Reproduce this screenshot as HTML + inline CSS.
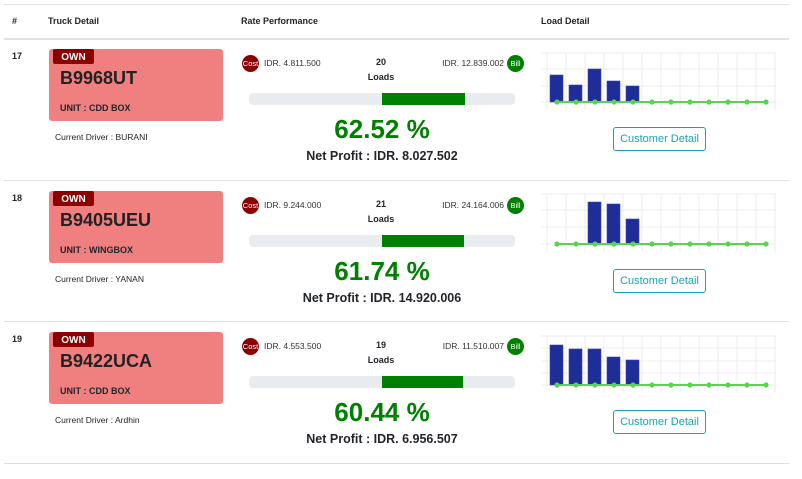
<!DOCTYPE html>
<html><head><meta charset="utf-8"><style>
*{margin:0;padding:0;box-sizing:border-box}
body{width:802px;height:479px;background:#fff;font-family:"Liberation Sans",sans-serif;color:#212529;position:relative;overflow:hidden}
.a{position:absolute;white-space:nowrap}
.line{position:absolute;left:4px;width:785px;background:#dee2e6}
.h{font-size:9px;font-weight:bold;top:16px}
.card{position:absolute;left:49px;width:174px;height:72px;background:#f08080;border-radius:3px}
.own{position:absolute;left:53px;width:41px;height:15px;background:#8b0000;color:#fff;font-size:10px;font-weight:bold;display:flex;align-items:center;justify-content:center;border-radius:2px;padding-top:1px}
.plate{font-size:18px;font-weight:bold;left:60px;color:#222}
.unit{font-size:9px;font-weight:bold;left:60px}
.drv{font-size:8.5px;left:55px}
.circ{position:absolute;width:17px;height:17px;border-radius:50%;color:#fff;font-size:7.5px;display:flex;align-items:center;justify-content:center}
.sm{font-size:8.5px;color:#333}
.loads{font-size:9px;font-weight:bold;text-align:center;width:40px;left:361px;line-height:15px}
.bar{position:absolute;left:249px;width:266px;height:12px;background:#e9ecef;border-radius:4px}
.fill{position:absolute;left:382px;height:12px;background:#008000}
.pct{font-size:26px;font-weight:bold;color:#008000;width:300px;left:232px;text-align:center}
.np{font-size:12.5px;font-weight:bold;width:300px;left:232px;text-align:center}
.btn{position:absolute;left:613px;width:93px;height:24px;border:1px solid #17a2b8;border-radius:3px;color:#17a2b8;font-size:11px;text-align:center;line-height:22px}
.num{font-size:9px;font-weight:bold;left:12px}
</style></head><body>
<div class="line" style="top:4px;height:1px"></div>
<div class="a h" style="left:12px">#</div>
<div class="a h" style="left:48px">Truck Detail</div>
<div class="a h" style="left:241px">Rate Performance</div>
<div class="a h" style="left:541px">Load Detail</div>
<div class="line" style="top:38px;height:2px"></div>

<!-- row 1 -->
<div class="a num" style="top:51px">17</div>
<div class="card" style="top:49px"></div><div class="own" style="top:49px">OWN</div>
<div class="a plate" style="top:68px">B9968UT</div>
<div class="a unit" style="top:103px">UNIT : CDD BOX</div>
<div class="a drv" style="top:132px">Current Driver : BURANI</div>
<div class="circ" style="left:242px;top:55px;background:#8b0000">Cost</div>
<div class="a sm" style="left:264px;top:58px">IDR. 4.811.500</div>
<div class="a loads" style="top:55px">20<br>Loads</div>
<div class="a sm" style="right:298px;top:58px">IDR. 12.839.002</div>
<div class="circ" style="left:507px;top:55px;background:#008000">Bill</div>
<div class="bar" style="top:93px"></div><div class="fill" style="top:93px;width:83px"></div>
<div class="a pct" style="top:114px">62.52 %</div>
<div class="a np" style="top:149px">Net Profit : IDR. 8.027.502</div>
<svg class="a" style="left:540px;top:50px" width="240" height="62"><g stroke="#ececec" stroke-width="1"><path d="M1 3H236M1 19H236M1 36H236M1 52H236"/><path d="M7 3V60M26 3V60M45 3V60M64 3V60M83 3V60M102 3V60M121 3V60M140 3V60M159 3V60M178 3V60M197 3V60M216 3V60M235 3V60"/></g><g fill="#1f2d98" stroke="#3a47b0" stroke-width=".6"><rect x="10" y="25" width="13" height="27"/><rect x="29" y="35" width="13" height="17"/><rect x="48" y="19" width="13" height="33"/><rect x="67" y="31" width="13" height="21"/><rect x="86" y="36" width="13" height="16"/></g><path d="M17 52H226" stroke="#56d64a" stroke-width="2"/><g fill="#56d64a"><circle cx="17" cy="52" r="2.6"/><circle cx="36" cy="52" r="2.6"/><circle cx="55" cy="52" r="2.6"/><circle cx="74" cy="52" r="2.6"/><circle cx="93" cy="52" r="2.6"/><circle cx="112" cy="52" r="2.6"/><circle cx="131" cy="52" r="2.6"/><circle cx="150" cy="52" r="2.6"/><circle cx="169" cy="52" r="2.6"/><circle cx="188" cy="52" r="2.6"/><circle cx="207" cy="52" r="2.6"/><circle cx="226" cy="52" r="2.6"/></g></svg>
<div class="btn" style="top:127px">Customer Detail</div>
<div class="line" style="top:180px;height:1px"></div>

<!-- row 2 -->
<div class="a num" style="top:193px">18</div>
<div class="card" style="top:191px"></div><div class="own" style="top:191px">OWN</div>
<div class="a plate" style="top:210px">B9405UEU</div>
<div class="a unit" style="top:245px">UNIT : WINGBOX</div>
<div class="a drv" style="top:274px">Current Driver : YANAN</div>
<div class="circ" style="left:242px;top:197px;background:#8b0000">Cost</div>
<div class="a sm" style="left:264px;top:200px">IDR. 9.244.000</div>
<div class="a loads" style="top:197px">21<br>Loads</div>
<div class="a sm" style="right:298px;top:200px">IDR. 24.164.006</div>
<div class="circ" style="left:507px;top:197px;background:#008000">Bill</div>
<div class="bar" style="top:235px"></div><div class="fill" style="top:235px;width:82px"></div>
<div class="a pct" style="top:256px">61.74 %</div>
<div class="a np" style="top:291px">Net Profit : IDR. 14.920.006</div>
<svg class="a" style="left:540px;top:192px" width="240" height="62"><g stroke="#ececec" stroke-width="1"><path d="M1 2H236M1 18H236M1 35H236M1 52H236"/><path d="M7 2V60M26 2V60M45 2V60M64 2V60M83 2V60M102 2V60M121 2V60M140 2V60M159 2V60M178 2V60M197 2V60M216 2V60M235 2V60"/></g><g fill="#1f2d98" stroke="#3a47b0" stroke-width=".6"><rect x="48" y="10" width="13" height="42"/><rect x="67" y="12" width="13" height="40"/><rect x="86" y="27" width="13" height="25"/></g><path d="M17 52H226" stroke="#56d64a" stroke-width="2"/><g fill="#56d64a"><circle cx="17" cy="52" r="2.6"/><circle cx="36" cy="52" r="2.6"/><circle cx="55" cy="52" r="2.6"/><circle cx="74" cy="52" r="2.6"/><circle cx="93" cy="52" r="2.6"/><circle cx="112" cy="52" r="2.6"/><circle cx="131" cy="52" r="2.6"/><circle cx="150" cy="52" r="2.6"/><circle cx="169" cy="52" r="2.6"/><circle cx="188" cy="52" r="2.6"/><circle cx="207" cy="52" r="2.6"/><circle cx="226" cy="52" r="2.6"/></g></svg>
<div class="btn" style="top:269px">Customer Detail</div>
<div class="line" style="top:321px;height:1px"></div>

<!-- row 3 -->
<div class="a num" style="top:334px">19</div>
<div class="card" style="top:332px"></div><div class="own" style="top:332px">OWN</div>
<div class="a plate" style="top:351px">B9422UCA</div>
<div class="a unit" style="top:386px">UNIT : CDD BOX</div>
<div class="a drv" style="top:415px">Current Driver : Ardhin</div>
<div class="circ" style="left:242px;top:338px;background:#8b0000">Cost</div>
<div class="a sm" style="left:264px;top:341px">IDR. 4.553.500</div>
<div class="a loads" style="top:338px">19<br>Loads</div>
<div class="a sm" style="right:298px;top:341px">IDR. 11.510.007</div>
<div class="circ" style="left:507px;top:338px;background:#008000">Bill</div>
<div class="bar" style="top:376px"></div><div class="fill" style="top:376px;width:81px"></div>
<div class="a pct" style="top:397px">60.44 %</div>
<div class="a np" style="top:432px">Net Profit : IDR. 6.956.507</div>
<svg class="a" style="left:540px;top:333px" width="240" height="62"><g stroke="#ececec" stroke-width="1"><path d="M1 3H236M1 15H236M1 28H236M1 40H236M1 52H236"/><path d="M7 3V60M26 3V60M45 3V60M64 3V60M83 3V60M102 3V60M121 3V60M140 3V60M159 3V60M178 3V60M197 3V60M216 3V60M235 3V60"/></g><g fill="#1f2d98" stroke="#3a47b0" stroke-width=".6"><rect x="10" y="12" width="13" height="40"/><rect x="29" y="16" width="13" height="36"/><rect x="48" y="16" width="13" height="36"/><rect x="67" y="24" width="13" height="28"/><rect x="86" y="27" width="13" height="25"/></g><path d="M17 52H226" stroke="#56d64a" stroke-width="2"/><g fill="#56d64a"><circle cx="17" cy="52" r="2.6"/><circle cx="36" cy="52" r="2.6"/><circle cx="55" cy="52" r="2.6"/><circle cx="74" cy="52" r="2.6"/><circle cx="93" cy="52" r="2.6"/><circle cx="112" cy="52" r="2.6"/><circle cx="131" cy="52" r="2.6"/><circle cx="150" cy="52" r="2.6"/><circle cx="169" cy="52" r="2.6"/><circle cx="188" cy="52" r="2.6"/><circle cx="207" cy="52" r="2.6"/><circle cx="226" cy="52" r="2.6"/></g></svg>
<div class="btn" style="top:410px">Customer Detail</div>
<div class="line" style="top:463px;height:1px"></div>
</body></html>
